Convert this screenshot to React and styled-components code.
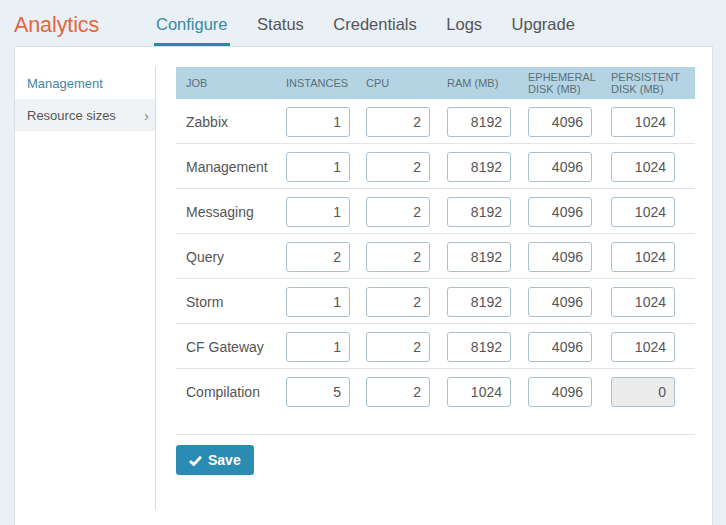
import React from "react";
import styled, { createGlobalStyle } from "styled-components";

const GlobalStyle = createGlobalStyle`
  html, body {
    margin: 0;
    padding: 0;
    background: #e9f1f7;
    font-family: "Liberation Sans", Arial, sans-serif;
    color: #555;
  }
  * { box-sizing: border-box; }
`;

const Page = styled.div`
  width: 726px;
  height: 525px;
  overflow: hidden;
`;

const Header = styled.header`
  display: flex;
  align-items: flex-end;
  height: 46px;
  padding-left: 14px;
`;

const Brand = styled.h1`
  margin: 0 0 8px;
  width: 140px;
  font-size: 21.5px;
  font-weight: 400;
  color: #e6653c;
  letter-spacing: -0.1px;
`;

const Tabs = styled.nav`
  display: flex;
  gap: 25.5px;
`;

const Tab = styled.a`
  display: block;
  padding: 0 2px 9px;
  font-size: 16.5px;
  color: ${(p) => (p.$active ? "#3b88a8" : "#555")};
  border-bottom: 3px solid ${(p) => (p.$active ? "#2b87a8" : "transparent")};
`;

const Panel = styled.div`
  display: flex;
  margin-left: 14px;
  width: 699px;
  height: 490px;
  background: #fff;
  border: 1px solid #d8e2e8;
`;

const Sidebar = styled.aside`
  width: 141px;
  margin-top: 20px;
  height: 443px;
  border-right: 1px solid #d6dee3;
`;

const SideItem = styled.div`
  display: flex;
  align-items: center;
  justify-content: space-between;
  height: 32px;
  padding: 0 6px 0 12px;
  font-size: 13px;
  color: ${(p) => (p.$link ? "#3f87a6" : "#555")};
  background: ${(p) => (p.$selected ? "#f0f3f5" : "transparent")};
`;

const Chevron = styled.span`
  font-size: 15px;
  color: #888;
`;

const Main = styled.main`
  flex: 1;
  padding: 20px 17px 0 20px;
`;

const Grid = styled.div`
  display: grid;
  grid-template-columns: 100px 80px 81px 81px 83px 94px;
`;

const HeadRow = styled(Grid)`
  height: 32px;
  align-items: center;
  background: #b4d4e3;
`;

const HeadCell = styled.div`
  padding-left: 10px;
  font-size: 11px;
  line-height: 12px;
  color: #5d6f79;
  text-transform: uppercase;
`;

const Row = styled(Grid)`
  height: 45px;
  padding-top: 1px;
  align-items: center;
  border-bottom: 1px solid ${(p) => (p.$last ? "transparent" : "#dde6ea")};
`;

const Label = styled.div`
  padding-left: 10px;
  font-size: 14px;
  color: #555;
`;

const Cell = styled.div`
  padding-left: 10px;
`;

const NumInput = styled.input`
  display: block;
  width: 64px;
  height: 30px;
  padding: 0 8px;
  border: 1px solid #a7c1cf;
  border-radius: 3px;
  background: ${(p) => (p.disabled ? "#ececec" : "#fff")};
  font-family: inherit;
  font-size: 14px;
  color: #555;
  text-align: right;
`;

const Divider = styled.div`
  margin-top: 20px;
  border-top: 1px solid #dde6ea;
`;

const SaveButton = styled.button`
  display: flex;
  align-items: center;
  gap: 6px;
  margin-top: 10px;
  height: 30px;
  width: 78px;
  padding: 0 13px;
  border: none;
  border-radius: 3px;
  background: #2b8cb3;
  color: #fff;
  font-family: inherit;
  font-size: 14px;
  font-weight: 700;
`;

const columns = [
  "Job",
  "Instances",
  "CPU",
  "RAM (MB)",
  "Ephemeral disk (MB)",
  "Persistent disk (MB)",
];

const jobs = [
  ["Zabbix", 1, 2, 8192, 4096, 1024],
  ["Management", 1, 2, 8192, 4096, 1024],
  ["Messaging", 1, 2, 8192, 4096, 1024],
  ["Query", 2, 2, 8192, 4096, 1024],
  ["Storm", 1, 2, 8192, 4096, 1024],
  ["CF Gateway", 1, 2, 8192, 4096, 1024],
  ["Compilation", 5, 2, 1024, 4096, 0],
];

const Check = () => (
  <svg width="13" height="11" viewBox="0 0 13 11">
    <path d="M1 6 L4.8 9.5 L12 1.8" fill="none" stroke="#fff" strokeWidth="2.8" />
  </svg>
);

const App = () => {
  return (
    <Page>
      <GlobalStyle />
      <Header>
        <Brand>Analytics</Brand>
        <Tabs>
          <Tab $active>Configure</Tab>
          <Tab>Status</Tab>
          <Tab>Credentials</Tab>
          <Tab>Logs</Tab>
          <Tab>Upgrade</Tab>
        </Tabs>
      </Header>

      <Panel>
        <Sidebar>
          <SideItem $link>Management</SideItem>
          <SideItem $selected>
            Resource sizes <Chevron>›</Chevron>
          </SideItem>
        </Sidebar>

        <Main>
          <HeadRow>
            {columns.map((c) => (
              <HeadCell key={c}>{c}</HeadCell>
            ))}
          </HeadRow>
          {jobs.map(([name, ...vals], i) => (
            <Row key={name} $last={i === jobs.length - 1}>
              <Label>{name}</Label>
              {vals.map((v, j) => (
                <Cell key={j}>
                  <NumInput
                    defaultValue={v}
                    disabled={name === "Compilation" && j === 4}
                  />
                </Cell>
              ))}
            </Row>
          ))}
          <Divider />
          <SaveButton>
            <Check /> Save
          </SaveButton>
        </Main>
      </Panel>
    </Page>
  );
};

export default App;
